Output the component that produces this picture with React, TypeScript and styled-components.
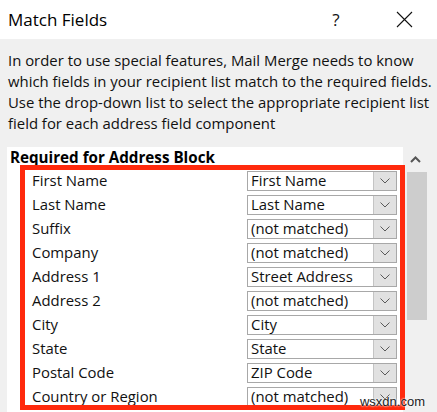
import React from "react";
import styled, { createGlobalStyle } from "styled-components";

const GlobalStyle = createGlobalStyle`
  html, body {
    margin: 0;
    padding: 0;
    width: 437px;
    height: 412px;
    overflow: hidden;
    background: #f0f0f0;
    font-family: "Open Sans", "Noto Sans", "DejaVu Sans", sans-serif;
    color: #000;
  }
`;

const Dialog = styled.div`
  position: relative;
  display: flex;
  flex-direction: column;
  width: 437px;
  height: 412px;
  overflow: hidden;
`;

const TitleBar = styled.div`
  display: flex;
  align-items: center;
  justify-content: space-between;
  height: 39px;
  padding-left: 8px;
  background: #fff;
`;

const Title = styled.div`
  font-size: 17px;
`;

const Controls = styled.div`
  display: flex;
  padding-right: 10px;
`;

const ControlButton = styled.div`
  display: flex;
  align-items: center;
  justify-content: center;
  width: 46px;
  height: 39px;
  margin-left: 22px;
  font-size: 17px;
  color: #111;
`;

const Body = styled.div`
  flex: 1;
  display: flex;
  flex-direction: column;
  padding: 11px 0 0 8px;
`;

const Intro = styled.p`
  margin: 0 0 13px;
  font-size: 14.9px;
  line-height: 21px;
  white-space: nowrap;
  color: #111;
`;

const ListFrame = styled.div`
  flex: 1;
  display: flex;
  margin-left: -1px;
`;

const List = styled.div`
  position: relative;
  width: 396px;
  background: #fff;
`;

const GroupHeading = styled.div`
  padding: 0 3px 2px;
  font-size: 15.2px;
  line-height: 20px;
  font-weight: 700;
`;

const FieldRow = styled.div`
  display: grid;
  grid-template-columns: 215px 150px;
  align-items: center;
  height: 24px;
  padding-left: 25px;
`;

const FieldLabel = styled.div`
  padding-bottom: 2px;
  font-size: 14.9px;
  color: #111;
`;

const Select = styled.div`
  display: flex;
  align-items: center;
  height: 20px;
  box-sizing: border-box;
  border: 1px solid #a8a8a8;
  background: #fff;
`;

const SelectValue = styled.div`
  flex: 1;
  align-self: center;
  padding: 0 0 2px 3px;
  font-size: 14.9px;
  line-height: 16px;
  color: #111;
  white-space: nowrap;
`;

const SelectButton = styled.div`
  display: flex;
  align-self: stretch;
  align-items: center;
  justify-content: center;
  width: 22px;
  background: #e1e1e1;
  border-left: 1px solid #c4c4c4;
`;

const ScrollBar = styled.div`
  display: flex;
  flex-direction: column;
  width: 24px;
`;

const ScrollArrow = styled.div`
  display: flex;
  align-items: center;
  justify-content: center;
  height: 25px;
`;

const ScrollThumb = styled.div`
  height: 148px;
  margin-left: 4px;
  width: 20px;
  background: #cdcdcd;
`;

const Highlight = styled.div`
  position: absolute;
  left: 13px;
  top: 18px;
  width: 385px;
  height: 245px;
  box-sizing: border-box;
  border: 5px solid #ff2a0d;
  pointer-events: none;
`;

const Watermark = styled.div`
  position: absolute;
  right: 12px;
  bottom: 3px;
  font-family: "Liberation Sans", Arial, sans-serif;
  font-size: 13px;
  color: #222;
  text-shadow: 0 0 2px #fff, 0 0 2px #fff;
`;

const fields: [string, string][] = [
  ["First Name", "First Name"],
  ["Last Name", "Last Name"],
  ["Suffix", "(not matched)"],
  ["Company", "(not matched)"],
  ["Address 1", "Street Address"],
  ["Address 2", "(not matched)"],
  ["City", "City"],
  ["State", "State"],
  ["Postal Code", "ZIP Code"],
  ["Country or Region", "(not matched)"],
];

const Chevron = () => (
  <svg width="10" height="6" viewBox="0 0 10 6">
    <path d="M0.5 0.5 L5 5 L9.5 0.5" fill="none" stroke="#5a5a5a" strokeWidth="1" />
  </svg>
);

const UpChevron = () => (
  <svg width="11" height="7" viewBox="0 0 11 7">
    <path d="M1 6 L5.5 1.5 L10 6" fill="none" stroke="#555" strokeWidth="2" />
  </svg>
);

const CloseIcon = () => (
  <svg width="17" height="17" viewBox="0 0 17 17">
    <path d="M1 1 L16 16 M16 1 L1 16" fill="none" stroke="#111" strokeWidth="1.1" />
  </svg>
);

const App = () => (
  <Dialog>
    <GlobalStyle />
    <TitleBar>
      <Title>Match Fields</Title>
      <Controls>
        <ControlButton>?</ControlButton>
        <ControlButton>
          <CloseIcon />
        </ControlButton>
      </Controls>
    </TitleBar>
    <Body>
      <Intro>
        In order to use special features, Mail Merge needs to know
        <br />
        which fields in your recipient list match to the required fields.
        <br />
        Use the drop-down list to select the appropriate recipient list
        <br />
        field for each address field component
      </Intro>
      <ListFrame>
        <List>
          <GroupHeading>Required for Address Block</GroupHeading>
          {fields.map(([label, value]) => (
            <FieldRow key={label}>
              <FieldLabel>{label}</FieldLabel>
              <Select>
                <SelectValue>{value}</SelectValue>
                <SelectButton>
                  <Chevron />
                </SelectButton>
              </Select>
            </FieldRow>
          ))}
          <Highlight />
        </List>
        <ScrollBar>
          <ScrollArrow>
            <UpChevron />
          </ScrollArrow>
          <ScrollThumb />
        </ScrollBar>
      </ListFrame>
    </Body>
    <Watermark>wsxdn.com</Watermark>
  </Dialog>
);

export default App;
